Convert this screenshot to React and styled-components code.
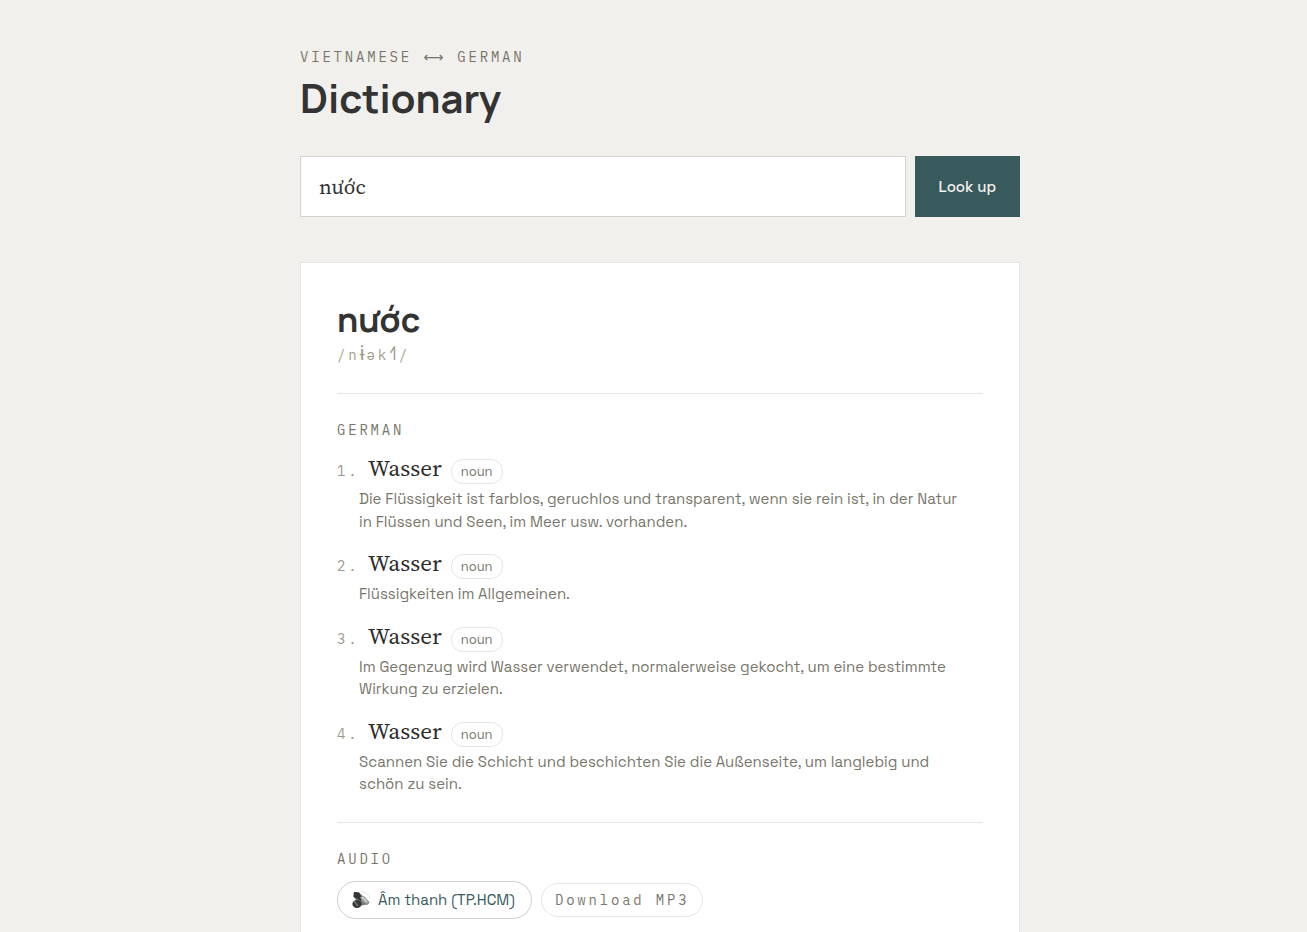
import React, { useState } from 'react';
import styled, { createGlobalStyle } from 'styled-components';

const sans = `'Space Grotesk', Inter, sans-serif`;
const display = `Manrope, Inter, sans-serif`;
const mono = `'IBM Plex Mono', 'Liberation Mono', monospace`;
const serif = `'Source Serif 4', 'Liberation Serif', serif`;

const GlobalStyle = createGlobalStyle`
  *, *::before, *::after { box-sizing: border-box; }
  body {
    margin: 0;
    background: #f2f0ec;
    color: #333;
    font-family: ${sans};
  }
  h1, h2, h3, p, ol { margin: 0; padding: 0; }
  ::-webkit-scrollbar { display: none; }
`;

const Page = styled.main`
  padding: 45px 0 48px 13px;
`;

const Container = styled.div`
  max-width: 720px;
  margin: 0 auto;
`;

const Label = styled.p`
  height: 24px;
  font: 400 14px/24px ${mono};
  letter-spacing: 0.2em;
  text-transform: uppercase;
  color: #78766b;
`;

const Arrow = styled.span`
  font-family: 'DejaVu Sans', sans-serif;
`;

const Title = styled.h1`
  margin-top: 3px;
  font: 700 40px/52px ${display};
`;

const SearchForm = styled.form`
  display: flex;
  gap: 9px;
  margin: 32px 0 45px;
`;

const SearchInput = styled.input`
  flex: 1;
  min-width: 0;
  height: 61px;
  padding: 0 18px;
  border: 1px solid #d3d2cf;
  border-radius: 0;
  background: #fff;
  color: #333;
  font: 400 21px ${serif};
  outline: none;
`;

const SubmitButton = styled.button`
  padding: 0 24px;
  border: 0;
  background: #385a5d;
  color: #f2f0ec;
  font: 500 15px ${sans};
  cursor: pointer;
`;

const Card = styled.article`
  padding: 32px 36px 36px;
  border: 1px solid #e6e5e3;
  background: #fff;
`;

const Headword = styled.h2`
  font: 700 34px/48px ${display};
`;

const Pronunciation = styled.p`
  height: 24px;
  font: 400 14px/22px ${mono};
  letter-spacing: 0.2em;
  color: #9d9a8d;
`;

const IpaSymbol = styled.span`
  font: 400 20px/20px 'Noto Sans', sans-serif;
  letter-spacing: 2px;
`;

const Section = styled.section`
  margin-top: 26px;
  padding-top: 24px;
  border-top: 1px solid #e6e5e3;
`;

const SenseList = styled.ol`
  list-style: none;
  display: grid;
  gap: 16px;
  margin-top: 12px;
`;

const SenseHead = styled.div`
  display: flex;
  align-items: baseline;
  height: 34px;
  line-height: 30px;
`;

const SenseNumber = styled.span`
  width: 31px;
  font: 400 14px ${mono};
  letter-spacing: 0.2em;
  color: #9d9a8d;
`;

const SenseWord = styled.h3`
  font: 400 23px/28px ${serif};
  color: #2c2c2c;
`;

const Tag = styled.span`
  margin-left: 9px;
  padding: 0 9px;
  border: 1px solid #e6e5e3;
  border-radius: 12px;
  font-size: 13px;
  line-height: 23px;
  color: #78766b;
`;

const Definition = styled.p`
  padding: 0 16px 0 22px;
  font-size: 15px;
  line-height: 1.5;
  color: #78766b;
`;

const AudioRow = styled.div`
  display: flex;
  align-items: center;
  gap: 9px;
  margin-top: 10px;
`;

const PlayButton = styled.button`
  display: flex;
  align-items: center;
  gap: 7px;
  height: 38px;
  padding: 0 16px 0 13px;
  border: 1px solid #cfcecb;
  border-radius: 19px;
  background: #fff;
  color: #385a5d;
  font: 400 15px ${sans};
  cursor: pointer;
`;

const DownloadLink = styled.a`
  padding: 0 13px;
  border: 1px solid #e6e5e3;
  border-radius: 17px;
  color: #78766b;
  font: 400 14px/32px ${mono};
  letter-spacing: 0.2em;
  text-decoration: none;
`;

const senses = [
  'Die Flüssigkeit ist farblos, geruchlos und transparent, wenn sie rein ist, in der Natur in Flüssen und Seen, im Meer usw. vorhanden.',
  'Flüssigkeiten im Allgemeinen.',
  'Im Gegenzug wird Wasser verwendet, normalerweise gekocht, um eine bestimmte Wirkung zu erzielen.',
  'Scannen Sie die Schicht und beschichten Sie die Außenseite, um langlebig und schön zu sein.',
];

function SpeakerIcon() {
  return (
    <svg width="20" height="20" viewBox="0 0 20 20" aria-hidden="true">
      <path d="M10 1.5Q17 2 19 9" fill="none" stroke="#e3e3e3" strokeWidth="1" />
      <path d="M3 2 8 2.5 18.5 12 17 14.5 10 15.5 2.5 7Z" fill="#777" />
      <path d="M3 2 8 2.5 12 9.5 10 11 2.5 6.5Z" fill="#303735" />
      <path d="m9 7 4-1 5 6-2 2.5-5-3Z" fill="#999b96" />
      <path d="m11 7 5 5" stroke="#ddd" strokeWidth="1.5" />
      <ellipse cx="6" cy="14" rx="4.6" ry="4" fill="#333735" />
      <path d="m3 11 4 5" stroke="#777" strokeWidth="1.5" />
    </svg>
  );
}

export default function App() {
  const [query, setQuery] = useState('nước');
  return (
    <>
      <GlobalStyle />
      <Page>
        <Container>
          <header>
            <Label>Vietnamese <Arrow>⟷</Arrow> German</Label>
            <Title>Dictionary</Title>
          </header>
          <SearchForm onSubmit={(e) => e.preventDefault()}>
            <SearchInput aria-label="Word" value={query} onChange={(e) => setQuery(e.target.value)} />
            <SubmitButton type="submit">Look up</SubmitButton>
          </SearchForm>
          <Card>
            <Headword>nước</Headword>
            <Pronunciation>/n<IpaSymbol>ɨ</IpaSymbol>ək<IpaSymbol>˧˥</IpaSymbol>/</Pronunciation>
            <Section>
              <Label as="h3">German</Label>
              <SenseList>
                {senses.map((text, i) => (
                  <li key={text}>
                    <SenseHead>
                      <SenseNumber>{i + 1}.</SenseNumber>
                      <SenseWord>Wasser</SenseWord>
                      <Tag>noun</Tag>
                    </SenseHead>
                    <Definition>{text}</Definition>
                  </li>
                ))}
              </SenseList>
            </Section>
            <Section>
              <Label as="h3">Audio</Label>
              <AudioRow>
                <PlayButton type="button"><SpeakerIcon />Âm thanh (TP.HCM)</PlayButton>
                <DownloadLink href="#download">Download MP3</DownloadLink>
              </AudioRow>
            </Section>
          </Card>
        </Container>
      </Page>
    </>
  );
}
